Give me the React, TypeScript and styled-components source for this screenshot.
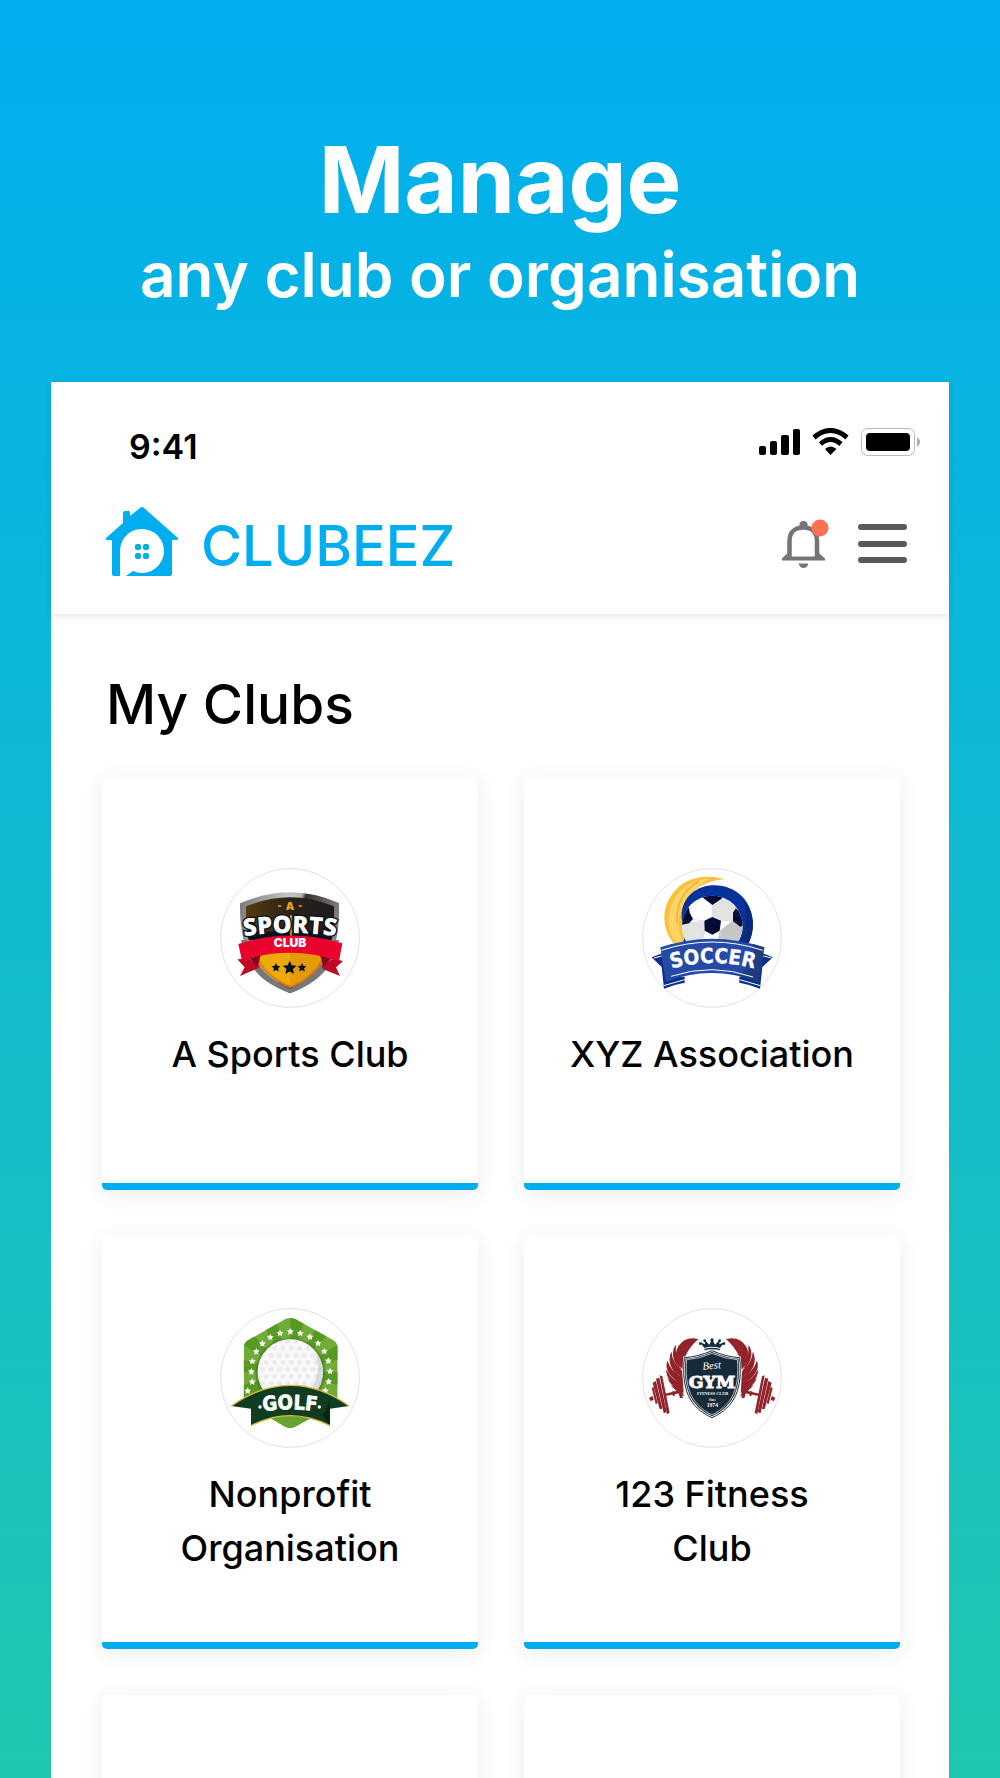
import React from "react";
import styled, { createGlobalStyle } from "styled-components";

const GlobalStyle = createGlobalStyle`
  * { box-sizing: border-box; }
  body {
    margin: 0;
    font-family: Inter, "Open Sans", sans-serif;
    color: #000;
  }
`;

const Page = styled.div`
  display: flex;
  flex-direction: column;
  height: 100vh;
  overflow: hidden;
  background: linear-gradient(180deg, #00aeef 0%, #20c7b0 100%);
`;

const Hero = styled.header`
  flex: none;
  padding: 128px 24px 64px;
  text-align: center;
  color: #fff;
`;

const HeroTitle = styled.h1`
  margin: 0;
  font-size: 92px;
  line-height: 104px;
  font-weight: 700;
`;

const HeroSubtitle = styled.p`
  margin: 0;
  font-size: 62px;
  line-height: 86px;
  font-weight: 600;
`;

const Phone = styled.main`
  flex: 1 0 auto;
  margin: 0 51px;
  background: #fff;
`;

const TopBar = styled.div`
  padding: 44px 28px 36px 54px;
  box-shadow: 0 2px 6px rgba(0, 0, 0, 0.1);
`;

const StatusBar = styled.div`
  display: flex;
  align-items: center;
  justify-content: space-between;
  height: 40px;
  padding-left: 24px;
`;

const Time = styled.span`
  font-size: 34px;
  line-height: 40px;
  padding-top: 2px;
  font-weight: 600;
`;

const StatusIcons = styled.svg`
  width: 162px;
  height: 30px;
  margin-bottom: 6px;
`;

const NavRow = styled.nav`
  display: flex;
  align-items: center;
  justify-content: space-between;
  height: 72px;
  margin-top: 40px;
`;

const Brand = styled.a`
  display: flex;
  align-items: center;
  gap: 22px;
  color: #00aeef;
  text-decoration: none;
`;

const BrandMark = styled.svg`
  width: 74px;
  height: 72px;
`;

const BrandName = styled.span`
  padding-top: 8px;
  font-size: 56px;
  line-height: 64px;
  font-weight: 500;
`;

const NavActions = styled.div`
  display: flex;
  align-items: center;
  gap: 28px;
  padding: 4px 13px 0 0;
`;

const IconButton = styled.button`
  display: flex;
  padding: 0;
  border: 0;
  background: none;
  cursor: pointer;
`;

const Content = styled.section`
  padding: 58px 49px 0 51px;
`;

const SectionTitle = styled.h2`
  margin: 0 4px 41px;
  font-size: 55px;
  line-height: 64px;
  font-weight: 500;
`;

const ClubGrid = styled.div`
  display: grid;
  grid-template-columns: 1fr 1fr;
  gap: 46px;
`;

const ClubCard = styled.a`
  display: flex;
  flex-direction: column;
  align-items: center;
  justify-content: center;
  gap: 19px;
  height: 413px;
  padding: 4px 40px 0;
  border-bottom: 7px solid #00aeef;
  border-radius: 5px;
  background: #fff;
  box-shadow: 0 4px 22px rgba(20, 20, 60, 0.08);
  color: inherit;
  text-align: center;
  text-decoration: none;
`;

const ClubName = styled.span`
  min-height: 70px;
  font-size: 36px;
  line-height: 54px;
  font-weight: 500;
  white-space: pre-line;
`;

const Emblem = styled.svg`
  flex: none;
  width: 140px;
  height: 140px;
`;

const starPoints = (cx: number, cy: number, r: number) =>
  Array.from({ length: 10 }, (_, i) => {
    const a = -Math.PI / 2 + (i * Math.PI) / 5;
    const q = i % 2 ? r * 0.48 : r;
    return `${(cx + q * Math.cos(a)).toFixed(1)},${(cy + q * Math.sin(a)).toFixed(1)}`;
  }).join(" ");

const Star = ({ x, y, r, fill }: { x: number; y: number; r: number; fill: string }) => (
  <polygon points={starPoints(x, y, r)} fill={fill} />
);

const Ring = ({ cx, cy }: { cx: number; cy: number }) => (
  <circle cx={cx} cy={cy} r="208" fill="#fff" stroke="#e2e2e2" strokeWidth="3" />
);

const SportsEmblem = () => (
  <Emblem viewBox="30 24 420 420" aria-hidden="true">
    <defs>
      <linearGradient id="steel" x1="0" x2="1" y1="0" y2="0.3">
        <stop offset="0" stopColor="#777" />
        <stop offset="0.45" stopColor="#c4c4c4" />
        <stop offset="0.58" stopColor="#b4b4b4" />
        <stop offset="0.62" stopColor="#333" />
        <stop offset="1" stopColor="#888" />
      </linearGradient>
      <linearGradient id="night" x1="0" x2="1">
        <stop offset="0" stopColor="#5c3d0c" />
        <stop offset="0.5" stopColor="#2b2218" />
        <stop offset="1" stopColor="#1d1b1d" />
      </linearGradient>
      <clipPath id="sportsShield">
        <path d="M108 139Q240 84 372 139C376 250 345 342 240 384C135 342 104 250 108 139Z" />
      </clipPath>
      <path id="sportsArc" d="M90 231Q240 207 390 231" />
    </defs>
    <Ring cx={240} cy={234} />
    <path d="M90 130Q240 64 387 129C392 262 354 352 240 400C126 352 88 262 90 130Z" fill="url(#steel)" />
    <path d="M112 240C128 300 160 350 240 387C318 350 350 300 368 240L387 240C370 320 330 366 240 400C150 366 112 320 93 240Z" fill="#777" />
    <g clipPath="url(#sportsShield)">
      <rect x="90" y="90" width="300" height="150" fill="url(#night)" />
      <rect x="90" y="215" width="300" height="30" fill="#07111f" />
      <rect x="90" y="240" width="300" height="160" fill="#e07d08" />
      <path d="M135 270Q240 245 345 270C325 325 290 358 240 376C190 358 155 325 135 270Z" fill="#f0a90c" />
      <path d="M240 255Q300 255 345 270C325 325 290 358 240 376Z" fill="#e59b07" />
      <path d="M243 165V230" stroke="#e5a60f" strokeWidth="5" />
    </g>
    <path d="M82 298L115 296L150 318L145 324L90 348L104 322Z" fill="#c00724" />
    <path d="M399 303L370 296L335 318L340 328L390 348L378 322Z" fill="#c00724" />
    <path d="M116 290L152 284L143 322Z" fill="#8b001b" />
    <path d="M366 290L330 284L341 322Z" fill="#8b001b" />
    <path d="M85 252Q240 202 397 250L387 303Q240 254 96 302Z" fill="#e8042c" />
    <text x="240" y="150" textAnchor="middle" fontSize="32" fontWeight="900" fill="#efa514">A</text>
    <path d="M204 138H213M266 138H275" stroke="#efa514" strokeWidth="4" />
    <text fontFamily="Open Sans" fontSize="72" fontWeight="800" fill="#fff" stroke="#07111f" strokeWidth="8" paintOrder="stroke" textAnchor="middle">
      <textPath href="#sportsArc" startOffset="50%">SPORTS</textPath>
    </text>
    <text x="240" y="261" textAnchor="middle" fontSize="36" fontWeight="900" fill="#fff">CLUB</text>
    <Star x={198} y={323} r={14} fill="#091321" />
    <Star x={239} y={324} r={22} fill="#091321" />
    <Star x={276} y={323} r={14} fill="#091321" />
  </Emblem>
);

const SoccerEmblem = () => (
  <Emblem viewBox="35 24 420 420" aria-hidden="true">
    <defs>
      <clipPath id="soccerBall"><circle cx="246" cy="198" r="91" /></clipPath>
      <path id="soccerArc" d="M110 330Q245 288 385 330" />
    </defs>
    <Ring cx={245} cy={234} />
    <path d="M284 58C238 44 180 48 144 82C92 130 90 200 130 250L176 250C148 190 160 130 194 90C220 68 255 60 284 58Z" fill="#fdbf3b" />
    <path d="M240 55C170 60 128 100 116 160C110 200 120 230 138 250L160 250C130 190 142 110 240 55Z" fill="#ffd467" />
    <path d="M205 64C160 90 136 132 140 190" fill="none" stroke="#f3a72d" strokeWidth="4" />
    <path d="M154 170C154 108 202 76 252 76C322 76 368 130 368 192C368 216 362 236 352 256H154C175 220 154 200 154 170Z" fill="#06329b" />
    <path d="M335 110Q390 180 352 256H325Q365 180 335 110Z" fill="#092a7c" />
    <g clipPath="url(#soccerBall)">
      <rect x="150" y="100" width="200" height="200" fill="#fff" />
      <path d="M246 135L272 118L310 124L326 155L307 184L271 181L246 171ZM150 182L188 185L222 182L226 212L212 250H150Z" fill="#e3e3e3" />
      <path d="M268 212L305 184L350 190V262H258Z" fill="#c6c6c6" />
      <path d="M222 182L246 171L272 182L268 212L246 224L223 212ZM216 112L246 135L276 115L270 98H220ZM176 142L160 152L152 195L176 190L188 177L178 158ZM316 145L308 158L308 184L330 200L343 195L336 160Z" fill="#060a36" />
      <path d="M188 178L222 183M178 150L216 112M272 182L308 184M276 115L316 148M223 212L212 250M268 212L280 250M246 135V171" stroke="#d8d8d8" strokeWidth="2" />
    </g>
    <path d="M64 292L100 278L128 352L163 350V368Q128 374 101 386L94 321Z" fill="#082f8f" />
    <path d="M428 292L390 277L364 352L327 350V368Q362 374 389 386L396 321Z" fill="#082f8f" />
    <path d="M90 262Q245 210 402 262L384 366Q245 312 106 365Z" fill="#244aa6" />
    <path d="M402 262L384 366L328 348Q376 290 370 253Z" fill="#1f3c80" />
    <path d="M93 271Q245 221 397 271M122 349Q245 308 368 351" fill="none" stroke="#fff" strokeWidth="3" />
    <path d="M71 294L94 288M424 294L399 288M100 377L163 359M390 377L328 359" stroke="#fff" strokeWidth="3" />
    <text fontFamily="DejaVu Sans Condensed, Roboto" fontSize="62" fontWeight="700" fill="#fff" stroke="#fff" strokeWidth="1" textAnchor="middle">
      <textPath href="#soccerArc" startOffset="50%">SOCCER</textPath>
    </text>
  </Emblem>
);

const golfStars = [
  [113, 284], [127, 257], [124, 226], [127, 195], [139, 166], [157, 142], [181, 123], [210, 111],
  [241, 106], [271, 111], [300, 122], [324, 141], [343, 165], [355, 194], [360, 225], [356, 256], [346, 284],
];

const GolfEmblem = () => (
  <Emblem viewBox="30 35 420 420" aria-hidden="true">
    <defs>
      <clipPath id="golfHex">
        <path d="M225 69Q241 61 257 69L370 132Q383 140 383 156V304Q383 320 370 328L258 390Q241 401 224 390L114 328Q101 320 101 304V156Q101 140 114 132Z" />
      </clipPath>
      <clipPath id="golfBall"><circle cx="241" cy="227" r="98" /></clipPath>
      <pattern id="dimples" width="25" height="42" patternUnits="userSpaceOnUse">
        <ellipse cx="8" cy="9" rx="8" ry="7" fill="#e9e9ee" />
        <ellipse cx="20" cy="30" rx="8" ry="7" fill="#e9e9ee" />
      </pattern>
      <path id="golfArc" d="M144 348Q240 330 336 348" />
    </defs>
    <Ring cx={240} cy={245} />
    <g clipPath="url(#golfHex)">
      <rect x="90" y="50" width="310" height="360" fill="#70ad37" />
      {Array.from({ length: 12 }, (_, i) => {
        const a = (i * Math.PI) / 6;
        const b = a + Math.PI / 12;
        return (
          <path
            key={i}
            fill="#579a23"
            d={`M241 228L${241 + 260 * Math.cos(a)} ${228 + 260 * Math.sin(a)}L${241 + 260 * Math.cos(b)} ${228 + 260 * Math.sin(b)}Z`}
          />
        );
      })}
    </g>
    <circle cx="241" cy="229" r="105" fill="#3c741d" opacity="0.5" />
    {golfStars.map(([x, y]) => <Star key={`${x}-${y}`} x={x} y={y} r={11} fill="#fff" />)}
    <g clipPath="url(#golfBall)">
      <rect x="140" y="125" width="202" height="202" fill="#f9f9fb" />
      <rect x="140" y="125" width="202" height="202" fill="url(#dimples)" />
      <path d="M310 150Q345 230 290 300L350 300V150Z" fill="#b5b5c2" opacity="0.45" />
    </g>
    <path d="M241 359Q280 359 300 365L258 390Q241 399 224 390L182 365Q205 359 241 359Z" fill="#65a52f" />
    <path d="M64 329Q150 267 241 267Q332 267 417 329L360 337V388Q300 358 241 358Q182 358 123 388V337Z" fill="#103d21" />
    <path d="M338 357L360 315V388Z" fill="#082515" />
    <path d="M64 329Q150 267 241 267Q332 267 417 329M123 388Q182 358 241 358Q300 358 360 388" fill="none" stroke="#e0b83a" strokeWidth="4" />
    <text fontFamily="DejaVu Sans Condensed, Roboto" fontSize="60" fontWeight="700" fill="#fff" stroke="#fff" strokeWidth="2" textAnchor="middle">
      <textPath href="#golfArc" startOffset="50%">GOLF</textPath>
    </text>
    <circle cx="150" cy="332" r="5" fill="#fff" />
    <circle cx="328" cy="332" r="5" fill="#fff" />
  </Emblem>
);

const GymWing = () => (
  <g>
    <path d="M204 128Q165 118 145 148Q132 166 140 194Q145 210 160 222Q152 176 204 128Z" />
    <path d="M137 145Q112 177 154 228Q131 184 137 145Z" />
    <path d="M123 166Q104 209 153 247Q124 206 123 166Z" />
    <path d="M111 193Q98 230 153 263Q120 230 111 193Z" />
    <path d="M108 220Q107 254 156 278Q128 254 108 220Z" />
    <path d="M111 245Q120 270 158 290Q137 268 111 245Z" />
    <path d="M119 265Q137 285 162 301L154 283Z" />
    <path d="M137 145Q131 180 156 226L160 290L146 282Q112 262 108 220Q118 244 148 258Q108 230 111 193Q122 224 150 240Q112 200 123 166Q126 196 152 222Q126 184 137 145Z" />
    <path d="M88 237L96 240L118 350L110 353Z" />
    <path d="M77 247L87 244L109 348L100 350Z" />
    <path d="M67 259L77 254L96 337L88 339Z" />
    <path d="M64 275L70 272L82 321L76 323Z" />
    <path d="M56 304L67 299L70 311L60 314Z" />
    <path d="M104 292L150 281L154 289L106 299Z" />
    <path d="M124 286L131 284L134 298L128 299ZM143 284L151 281L158 304L149 306Z" />
  </g>
);

const GymEmblem = () => (
  <Emblem viewBox="35 35 420 420" aria-hidden="true">
    <Ring cx={245} cy={245} />
    <g fill="#92232b">
      <GymWing />
      <g transform="translate(491 0) scale(-1 1)"><GymWing /></g>
    </g>
    <path d="M162 184Q200 182 245 163Q290 182 328 184C337 276 315 333 245 364C175 333 153 276 162 184Z" fill="#172a3a" stroke="#fff" strokeWidth="7" />
    <path d="M162 184Q200 182 245 163Q290 182 328 184C337 276 315 333 245 364C175 333 153 276 162 184Z" fill="none" stroke="#172a3a" strokeWidth="3" />
    <path d="M169 190Q205 188 245 171Q285 188 321 190C328 271 309 325 245 355C181 325 162 271 169 190Z" fill="none" stroke="#fff" strokeWidth="2" />
    <g fill="#172a3a">
      <path d="M222 155L208 137L224 144L223 131L237 145L245 128L254 145L268 131L267 144L283 137L269 155Q245 147 222 155Z" />
      <path d="M222 158Q245 151 269 158V162Q245 155 222 162Z" />
      <circle cx="245" cy="131" r="5" /><circle cx="223" cy="133" r="4" /><circle cx="268" cy="133" r="4" />
      <circle cx="210" cy="142" r="4" /><circle cx="281" cy="142" r="4" />
    </g>
    <g fill="#fff" textAnchor="middle" fontFamily="Liberation Serif" fontWeight="700">
      <text x="245" y="218" fontSize="32" fontWeight="400" fontStyle="italic" transform="rotate(-5 245 218)">Best</text>
      <text x="245" y="275" fontFamily="DejaVu Serif" fontSize="52" stroke="#fff" strokeWidth="3">GYM</text>
      <text x="247" y="295" fontSize="13">FITNESS CLUB</text>
      <text x="246" y="315" fontSize="9">Since</text>
      <text x="246" y="331" fontSize="17">1974</text>
    </g>
  </Emblem>
);

const clubs = [
  { name: "A Sports Club", Logo: SportsEmblem },
  { name: "XYZ Association", Logo: SoccerEmblem },
  { name: "Nonprofit\nOrganisation", Logo: GolfEmblem },
  { name: "123 Fitness\nClub", Logo: GymEmblem },
];

export default function App() {
  return (
    <>
      <GlobalStyle />
      <Page>
        <Hero>
          <HeroTitle>Manage</HeroTitle>
          <HeroSubtitle>any club or organisation</HeroSubtitle>
        </Hero>
        <Phone>
          <TopBar>
            <StatusBar>
              <Time>9:41</Time>
              <StatusIcons viewBox="0 0 162 30" aria-hidden="true">
                <rect x="0" y="18" width="7" height="9" rx="2" />
                <rect x="11" y="13" width="7" height="14" rx="2" />
                <rect x="22" y="7" width="8" height="20" rx="2" />
                <rect x="34" y="1" width="7" height="26" rx="2" />
                <g fill="none" stroke="#000" strokeWidth="5">
                  <path d="M55 9.5Q71.500 -4.500 88 9.500" />
                  <path d="M61.500 16Q71.500 7 82 16" />
                </g>
                <path d="M66 21Q71.500 16 77.500 21L71.500 27Z" />
                <rect x="102.500" y="0.500" width="53" height="27" rx="6" fill="#fff" stroke="#bbb" />
                <rect x="107" y="5" width="44" height="18" rx="4" />
                <path d="M158 9Q164 14 158 19Z" fill="#aaa" />
              </StatusIcons>
            </StatusBar>
            <NavRow>
              <Brand href="#home">
                <BrandMark viewBox="0 0 74 72" fill="#00aeef" aria-hidden="true">
                  <path d="M35 2Q37 0 39 2L73 32Q74 34 71 34H67V68Q67 70 65 70H21L28 65A22 22 0 1 0 15 45V70H9Q7 70 7 68V34H2Q0 34 1 32L18 17V7Q18 5 20 5H24Q25 5 25 7V10Z" />
                  <rect x="30" y="38" width="6" height="6" rx="2" />
                  <rect x="38" y="38" width="6" height="6" rx="2" />
                  <rect x="30" y="47" width="6" height="6" rx="2" />
                  <rect x="38" y="47" width="6" height="6" rx="2" />
                </BrandMark>
                <BrandName>CLUBEEZ</BrandName>
              </Brand>
              <NavActions>
                <IconButton type="button" aria-label="Notifications">
                  <svg width="48" height="50" viewBox="0 0 48 50">
                    <path d="M7.500 38V22C7.500 13 13 8.500 21.500 8.500S35 13 35 22V38" fill="none" stroke="#757575" strokeWidth="4.500" />
                    <path d="M17.500 8V5.500Q17.500 2 21.500 2Q25.500 2 25.500 5.500V8Z" fill="#757575" />
                    <path d="M5.500 34L0 39.500V41.500H43V39.500L37 34V37.500H5.500Z" fill="#757575" />
                    <path d="M16.500 44.500H26.500Q25 49 21.500 49Q18 49 16.500 44.500Z" fill="#757575" />
                    <circle cx="38" cy="9" r="8.500" fill="#ff7052" />
                  </svg>
                </IconButton>
                <IconButton type="button" aria-label="Menu">
                  <svg width="50" height="40" viewBox="0 0 50 40" stroke="#595959" strokeWidth="6" strokeLinecap="round">
                    <path d="M3 3H46M3 20H46M3 36H46" />
                  </svg>
                </IconButton>
              </NavActions>
            </NavRow>
          </TopBar>
          <Content>
            <SectionTitle>My Clubs</SectionTitle>
            <ClubGrid>
              {clubs.map(({ name, Logo }) => (
                <ClubCard key={name} href="#club">
                  <Logo />
                  <ClubName>{name}</ClubName>
                </ClubCard>
              ))}
              <ClubCard as="div" />
              <ClubCard as="div" />
            </ClubGrid>
          </Content>
        </Phone>
      </Page>
    </>
  );
}
